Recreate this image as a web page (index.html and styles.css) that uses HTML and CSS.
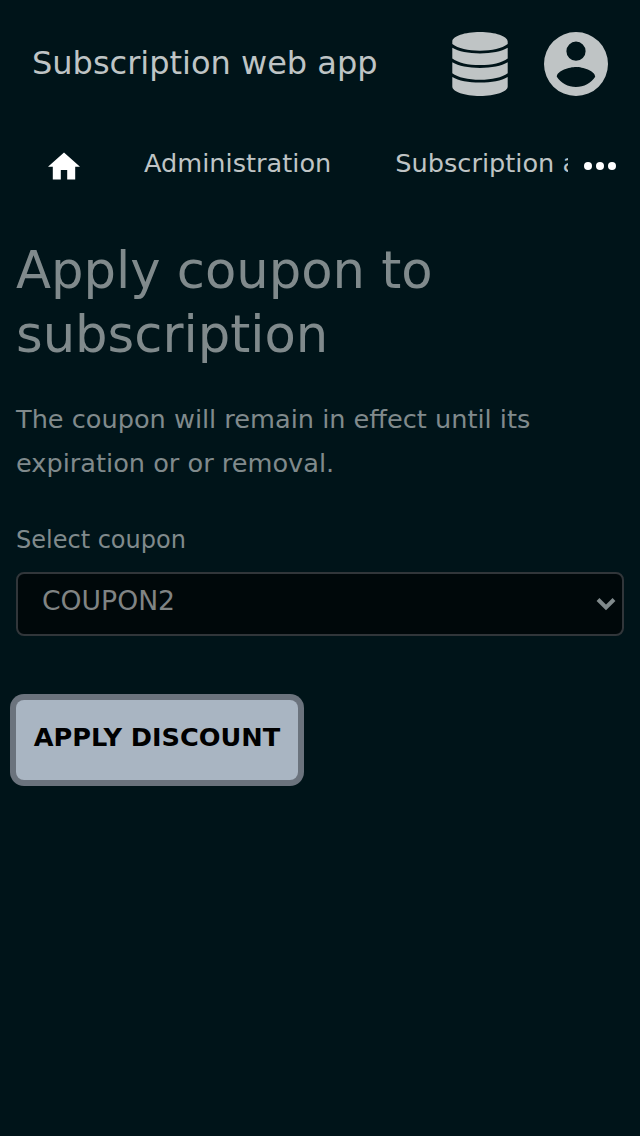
FILE: index.html
```html
<!DOCTYPE html>
<html lang="en">
<head>
<meta charset="utf-8">
<title>Subscription web app</title>
<link rel="stylesheet" href="styles.css">
</head>
<body>
<header class="topbar">
  <div class="brand">Subscription web app</div>
  <div class="actions">
    <svg class="icon" viewBox="0 0 64 64" fill="currentColor"><path d="M4.300 9.500C4.300 4.200 16.700 0 32 0s27.700 4.200 27.700 9.500v2.600C54 16.500 44 18.700 32 18.700S10 16.500 4.300 12.100zM4.300 15.800C10.500 19.500 20.500 21.400 32 21.400s21.500-1.900 27.700-5.600v10.700C54 30.800 44 33.100 32 33.100S10 30.800 4.300 26.500zM4.300 30.300C10.500 34 20.500 35.900 32 35.900s21.500-1.900 27.700-5.600v11C54 45.600 44 47.800 32 47.800S10 45.600 4.300 41.300zM4.300 44.900C10.500 48.600 20.500 50.500 32 50.500s21.500-1.900 27.700-5.600v9.600c0 5.200-12.400 9.500-27.700 9.500S4.300 59.700 4.300 54.500z"/></svg>
    <svg class="icon" viewBox="0 0 64 64" fill="currentColor"><path fill-rule="evenodd" d="M32 0a32 32 0 1 0 0 64a32 32 0 0 0 0-64zm0 9.600a9.600 9.600 0 1 1 0 19.200a9.600 9.600 0 0 1 0-19.200zm0 45.440c-8 0-15.070-4.100-19.200-10.300c.1-6.370 12.800-9.860 19.200-9.860s19.100 3.490 19.200 9.860c-4.130 6.200-11.200 10.300-19.200 10.300z"/></svg>
  </div>
</header>
<nav class="nav">
  <svg class="home" viewBox="2 3 20 17" fill="#fff"><path d="M10 20v-6h4v6h5v-8h3L12 3 2 12h3v8z"/></svg>
  <div class="links"><a>Administration</a><a>Subscription administration</a></div>
  <svg class="more" viewBox="0 0 32 8" fill="#fff"><circle cx="4" cy="4" r="4"/><circle cx="16" cy="4" r="4"/><circle cx="28" cy="4" r="4"/></svg>
</nav>
<main class="content">
  <h1 class="title">Apply coupon to subscription</h1>
  <p class="description">The coupon will remain in effect until its expiration or or removal.</p>
  <label class="label">Select coupon</label>
  <div class="select"><span class="value">COUPON2</span><svg class="chevron" viewBox="0 0 20 14" fill="none" stroke="currentColor" stroke-width="4"><path d="M2 2.500l8 8 8-8"/></svg></div>
  <button class="apply">APPLY DISCOUNT</button>
</main>
</body>
</html>
```
FILE: styles.css
```css
* { box-sizing: border-box; }
body { margin: 0; min-height: 1136px; background: #001419; color: #808a8c; font-family: "DejaVu Sans", sans-serif; overflow: hidden; }
.topbar { height: 128px; padding: 0 32px; display: flex; align-items: center; justify-content: space-between; color: #bfc4c5; }
.brand { font-size: 32px; padding-bottom: 2px; }
.actions { display: flex; gap: 32px; }
.icon { width: 64px; height: 64px; display: block; }
.nav { height: 72px; padding: 0 24px 0 48px; display: flex; align-items: center; color: #bfc4c5; }
.home { width: 32px; height: 28px; flex: none; margin-top: 4px; }
.links { width: 424px; margin: 0 16px 0 64px; padding-bottom: 2px; display: flex; gap: 64px; overflow: hidden; white-space: nowrap; font-size: 25.600px; }
.more { width: 32px; height: 8px; flex: none; margin-top: 4px; }
.content { padding: 38px 16px 0; }
.title { margin: 0; font-size: 51.200px; line-height: 64px; font-weight: 400; }
.description { margin: 31px 0 0; font-size: 25.600px; line-height: 44px; }
.label { display: block; margin-top: 41px; font-size: 24px; line-height: 28px; }
.select { margin-top: 18px; height: 64px; border: 2px solid #31363a; border-radius: 8px; background: #00080a; color: #808484; display: flex; align-items: center; justify-content: space-between; padding: 0 6px 6px 24px; font-size: 26.667px; }
.value { padding-bottom: 2px; }
.chevron { width: 20px; height: 14px; margin-top: 6px; color: #808a8c; }
.apply { display: block; margin-top: 64px; width: 282px; height: 80px; border: 0; border-radius: 8px; padding: 0 0 6px; background: #a9b5c2; color: #000; font: bold 25.600px "DejaVu Sans", sans-serif; box-shadow: 0 0 0 6px #6b737d; white-space: nowrap; }
```
